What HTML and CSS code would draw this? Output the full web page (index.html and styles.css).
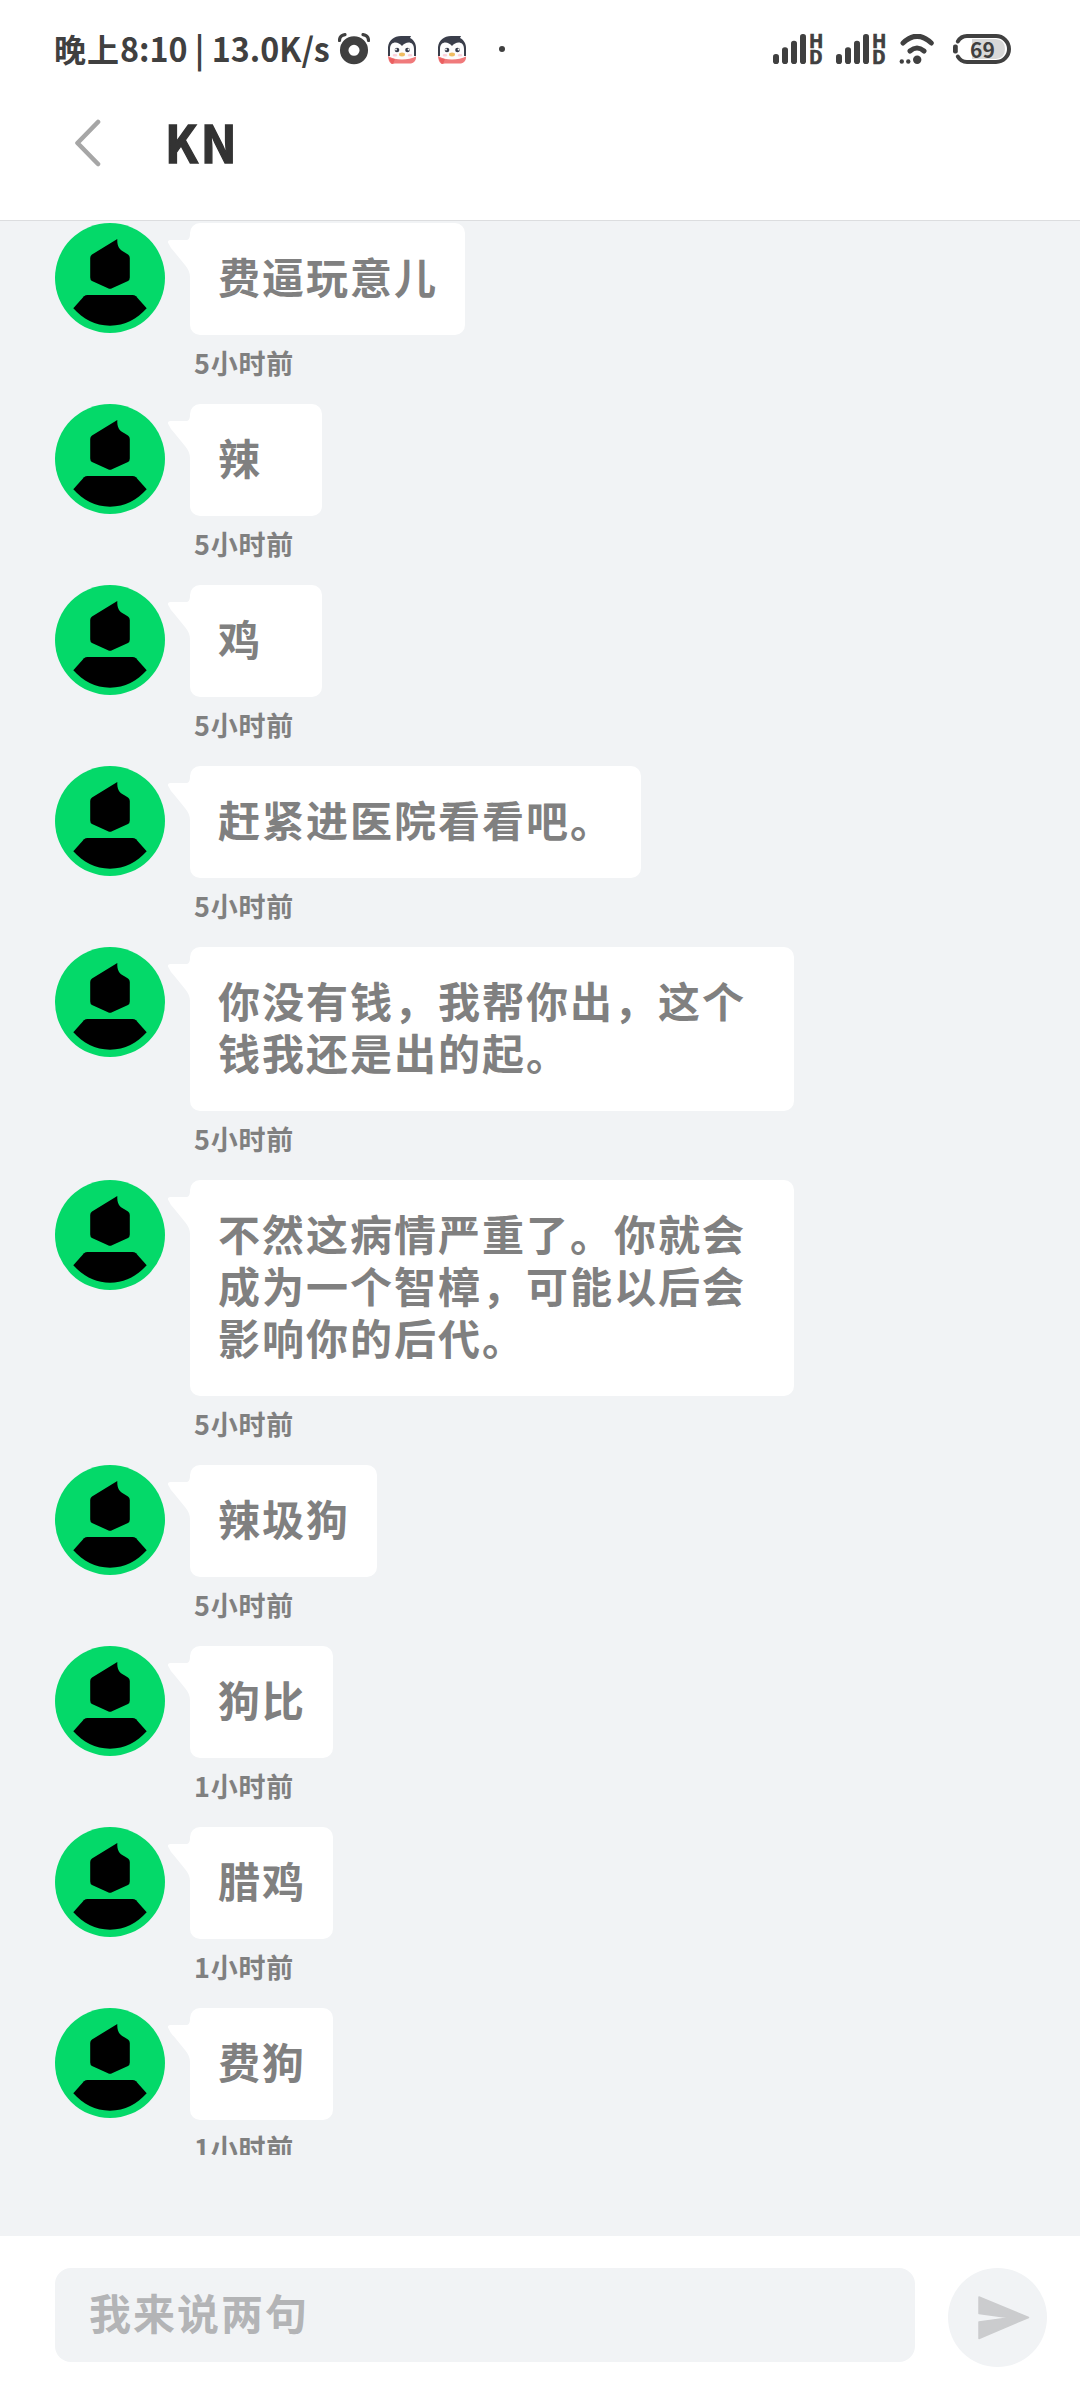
FILE: index.html
```html
<!DOCTYPE html>
<html lang="zh-CN">
<head>
<meta charset="utf-8">
<title>KN</title>
<link rel="stylesheet" href="styles.css">
</head>
<body>
<svg class="defs" aria-hidden="true">
  <symbol id="avatar" viewBox="0 0 110 110">
    <circle cx="55" cy="55" r="55" fill="#04d969"/>
    <path d="M62.3 16C62 23 64 26.500 69 29L73 31.500Q74.800 32.700 74.800 35V54.500Q74.800 57 73 58L57 65.300Q55 66.300 53 65.300L37 58Q35.200 57 35.200 54.500V35Q35.200 32.700 37 31.500Z"/>
    <path d="M32.500 72H77.500Q79.500 72 81 73.300L91.700 85.300C82 96 70 102.700 55 102.700S28 96 18.300 85.300L29 73.300Q30.500 72 32.500 72Z"/>
  </symbol>
  <symbol id="tail" viewBox="0 0 24 44">
    <path d="M24 0H22Q21.500 5 18.500 5H2Q-1.500 6 .8 9Q3 14 6 16.500L17 30Q22 36 22 42V44H24Z" fill="#fff"/>
  </symbol>
  <symbol id="penguin" viewBox="0 0 28 28">
    <path d="M0 20V11C1 4 6 0 13 0H23L22 2C26 4 28 8 28 12V20Z" fill="#3a3e4b"/>
    <path d="M2 20V13C2 5 10 5 14 10C18 5 26 5 26 13V20Q24 23 14 23T2 20Z" fill="#fcfcfd"/>
    <circle cx="9" cy="14" r="2.300" fill="#343949"/><circle cx="19.500" cy="14" r="2.300" fill="#343949"/>
    <circle cx="8" cy="13.500" r=".9" fill="#fff"/><circle cx="20.500" cy="13.500" r=".9" fill="#fff"/>
    <ellipse cx="7" cy="19.300" rx="2.300" ry="1.300" fill="#fbd0da"/><ellipse cx="22" cy="19.300" rx="2.300" ry="1.300" fill="#fbd0da"/>
    <ellipse cx="14" cy="18.500" rx="3" ry="1.900" fill="#efbd62"/>
    <path d="M0 20Q6 23.500 14 23.500T28 20.500Q28.500 26 23 27.500H7L3.500 28Q0 25 0 20Z" fill="#f07a7b"/>
    <path d="M1 22L7 23L5 28Q2 27 1 22Z" fill="#eb5f60"/>
  </symbol>
  <symbol id="bars" viewBox="0 0 34 30">
    <g fill="#404040"><rect y="20" width="6" height="10" rx="2.800"/><rect x="9" y="13.300" width="6" height="16.700" rx="2.800"/><rect x="18" y="6.700" width="6" height="23.300" rx="2.800"/><rect x="27" width="6" height="30" rx="2.800"/></g>
  </symbol>
</svg>

<header class="status">
  <div class="status-text"><span class="cn">晚上</span><span class="clock">8:10 | 13.0K/s</span></div>
  <svg class="alarm" viewBox="0 0 32 32" width="32" height="32">
    <circle cx="16" cy="17.300" r="9.800" fill="none" stroke="#404040" stroke-width="8.500"/>
    <path d="M1.500 7.500Q1.500 2.500 7 1.700M30.500 7.500Q30.500 2.500 25 1.700" fill="none" stroke="#404040" stroke-width="3.200" stroke-linecap="round"/>
  </svg>
  <svg class="penguin"><use href="#penguin"/></svg>
  <svg class="penguin"><use href="#penguin"/></svg>
  <span class="dot"></span>
  <div class="system">
    <div class="signal"><svg class="bars"><use href="#bars"/></svg><span class="hd"><span>H</span><span>D</span></span></div>
    <div class="signal"><svg class="bars"><use href="#bars"/></svg><span class="hd"><span>H</span><span>D</span></span></div>
    <svg class="wifi" viewBox="0 0 36 30" width="36" height="30">
      <path d="M4 9Q18 -4.500 32.300 9M11 17Q18 11 25 17" fill="none" stroke="#404040" stroke-width="5" stroke-linecap="round"/>
      <circle cx="18.200" cy="25.800" r="4.200" fill="#404040"/><circle cx="2.800" cy="27.500" r="2.200" fill="#404040"/><circle cx="9.300" cy="27.500" r="2.200" fill="#404040"/>
    </svg>
    <div class="battery">
      <svg viewBox="0 0 58 30" width="58" height="30">
        <path d="M19 5H43Q52 6 52 15T43 25H19Z" fill="#d8d8d8"/>
        <path d="M4.800 7.500Q8 2 14 2H43A13 13 0 0 1 43 28H14Q8 28 4.800 22.500" fill="none" stroke="#404040" stroke-width="4" stroke-linecap="round"/>
        <rect y="10.500" width="4.800" height="9" rx="2" fill="#404040"/>
      </svg>
      <span class="level">69</span>
    </div>
  </div>
</header>

<nav class="appbar">
  <svg class="back" viewBox="0 0 28 48" width="28" height="48"><path d="M25 3L4.500 24L25 45" fill="none" stroke="#a6a6a6" stroke-width="4.600" stroke-linecap="round" stroke-linejoin="round"/></svg>
  <h1 class="title">KN</h1>
</nav>

<main class="chat">
  <div class="row"><svg class="avatar"><use href="#avatar"/></svg><div class="message"><div class="bubble"><svg class="tail"><use href="#tail"/></svg>费逼玩意儿</div><time class="time">5小时前</time></div></div>
  <div class="row"><svg class="avatar"><use href="#avatar"/></svg><div class="message"><div class="bubble"><svg class="tail"><use href="#tail"/></svg>辣</div><time class="time">5小时前</time></div></div>
  <div class="row"><svg class="avatar"><use href="#avatar"/></svg><div class="message"><div class="bubble"><svg class="tail"><use href="#tail"/></svg>鸡</div><time class="time">5小时前</time></div></div>
  <div class="row"><svg class="avatar"><use href="#avatar"/></svg><div class="message"><div class="bubble"><svg class="tail"><use href="#tail"/></svg>赶紧进医院看看吧。</div><time class="time">5小时前</time></div></div>
  <div class="row"><svg class="avatar"><use href="#avatar"/></svg><div class="message"><div class="bubble"><svg class="tail"><use href="#tail"/></svg>你没有钱，我帮你出，这个钱我还是出的起。</div><time class="time">5小时前</time></div></div>
  <div class="row"><svg class="avatar"><use href="#avatar"/></svg><div class="message"><div class="bubble"><svg class="tail"><use href="#tail"/></svg>不然这病情严重了。你就会成为一个智樟，可能以后会影响你的后代。</div><time class="time">5小时前</time></div></div>
  <div class="row"><svg class="avatar"><use href="#avatar"/></svg><div class="message"><div class="bubble"><svg class="tail"><use href="#tail"/></svg>辣圾狗</div><time class="time">5小时前</time></div></div>
  <div class="row"><svg class="avatar"><use href="#avatar"/></svg><div class="message"><div class="bubble"><svg class="tail"><use href="#tail"/></svg>狗比</div><time class="time">1小时前</time></div></div>
  <div class="row"><svg class="avatar"><use href="#avatar"/></svg><div class="message"><div class="bubble"><svg class="tail"><use href="#tail"/></svg>腊鸡</div><time class="time">1小时前</time></div></div>
  <div class="row"><svg class="avatar"><use href="#avatar"/></svg><div class="message"><div class="bubble"><svg class="tail"><use href="#tail"/></svg>费狗</div><time class="time">1小时前</time></div></div>
</main>

<footer class="composer">
  <div class="field">我来说两句</div>
  <div class="send"><svg viewBox="0 0 52 44" width="52" height="44"><path d="M1 1L50.500 21.500L1 42.500V26L32 21.800L1 17.500Z" fill="#cbccce" stroke="#cbccce" stroke-width="1.500" stroke-linejoin="round"/></svg></div>
</footer>
</body>
</html>
```

FILE: styles.css
```css
* { box-sizing: border-box; }
body {
  margin: 0;
  width: 1080px;
  height: 2400px;
  display: flex;
  flex-direction: column;
  overflow: hidden;
  background: #f1f3f5;
  font-family: "Noto Sans CJK SC", sans-serif;
}
svg { display: block; flex: none; }
.defs { display: none; }

.status {
  height: 98px;
  flex: none;
  display: flex;
  align-items: center;
  padding: 0 69px 0 54px;
  background: #fff;
  color: #404040;
}
.status-text { display: flex; align-items: center; width: 284px; flex: none; white-space: nowrap; font-size: 32px; font-weight: 700; line-height: 40px; padding-bottom: 3px; }
.cn { width: 66px; flex: none; letter-spacing: 1px; }
.clock { font-size: 33px; font-weight: 700; transform: scaleX(.977); transform-origin: left; }
.alarm { margin-right: 18px; }
.penguin { width: 28px; height: 28px; margin-right: 22px; margin-top: 2px; }
.dot { width: 6px; height: 6px; border-radius: 50%; background: #404040; margin-left: 11px; }
.system { margin-left: auto; display: flex; align-items: center; }
.signal { display: flex; width: 63px; height: 30px; gap: 2px; }
.bars { width: 34px; height: 30px; }
.hd { display: flex; flex-direction: column; font: 700 19px/16px "Noto Sans CJK SC", sans-serif; height: 30px; margin-top: -2px; -webkit-text-stroke: .7px #404040; }
.wifi { margin-right: 18px; }
.battery { position: relative; width: 58px; height: 30px; }
.level { position: absolute; left: 17px; top: 0; font: 700 21px/30px "Noto Sans CJK SC", sans-serif; }

.appbar {
  height: 123px;
  flex: none;
  display: flex;
  align-items: flex-start;
  gap: 64px;
  padding: 21px 0 0 73px;
  background: #fff;
  border-bottom: 1px solid #dcdddf;
}
.title { margin: -8px 0 0; font-size: 51px; line-height: 60px; font-weight: 700; letter-spacing: 3px; color: #333; transform: scaleX(.94); transform-origin: left; -webkit-text-stroke: 1.4px #333; }

.chat { height: 1934px; flex: none; overflow: hidden; padding: 2px 0 0 55px; }
.row { display: flex; gap: 25px; }
.avatar { width: 110px; height: 110px; }
.message { display: flex; flex-direction: column; align-items: flex-start; }
.bubble {
  position: relative;
  min-width: 132px;
  max-width: 604px;
  padding: 27px 27px 33px 28px;
  border-radius: 10px;
  background: #fff;
  color: #808080;
  font-size: 42px;
  line-height: 52px;
  letter-spacing: 2px;
  font-weight: 700;
}
.tail { position: absolute; left: -22px; top: 12px; width: 24px; height: 44px; }
.time { height: 69px; padding: 8px 0 0 4px; font-size: 27px; line-height: 40px; letter-spacing: .8px; font-weight: 700; color: #808080; }

.composer {
  margin-top: auto;
  height: 164px;
  flex: none;
  display: flex;
  align-items: flex-start;
  gap: 33px;
  padding: 32px 33px 0 55px;
  background: #fff;
}
.field { flex: 1; height: 94px; padding: 0 34px; border-radius: 16px; background: #f1f3f5; color: #b3b4b6; font-size: 42px; line-height: 88px; letter-spacing: 2px; font-weight: 700; }
.send { width: 99px; height: 99px; border-radius: 50%; background: #f1f3f5; display: flex; align-items: center; padding-left: 30px; }
```
